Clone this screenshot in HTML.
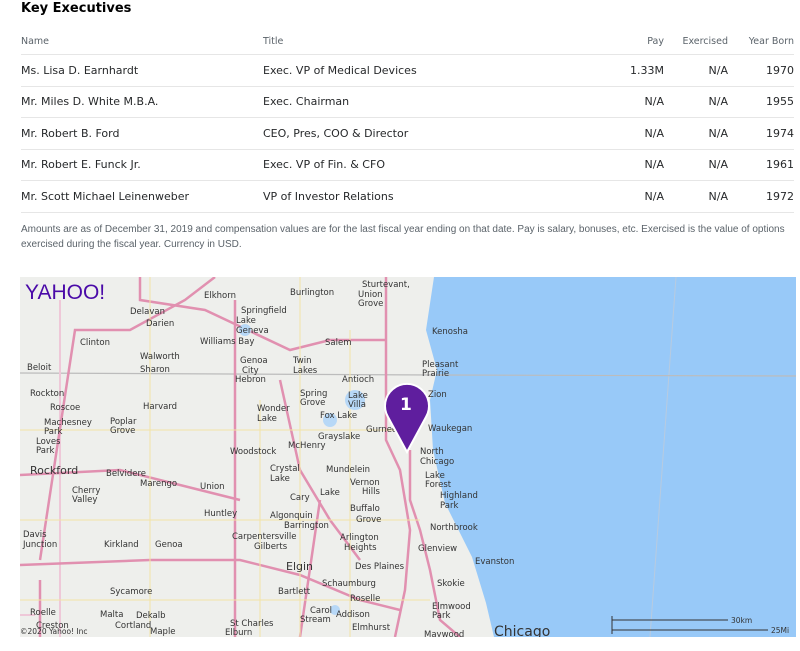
<!DOCTYPE html>
<html><head><meta charset="utf-8"><style>
body{margin:0;background:#fff;font-family:"DejaVu Sans","Liberation Sans",sans-serif;color:#26282a;width:800px;height:651px;overflow:hidden;position:relative}
h3{position:absolute;left:21px;top:1px;margin:0;font-size:13px;font-weight:bold;color:#000}
.r{position:absolute;left:21px;width:773px;height:31px;border-bottom:1px solid #e6e6e6;font-size:11px}
.r span{position:absolute;top:0;line-height:31px;white-space:nowrap}
.h{color:#5b636a;font-size:9.5px}
.c1{left:0}.c2{left:242px}.c3{right:130px}.c4{right:66px}.c5{right:0}
.note{position:absolute;left:21px;top:222px;width:770px;font-family:"Liberation Sans",sans-serif;font-size:10px;line-height:15px;color:#5b636a}
svg text{font-family:"DejaVu Sans",sans-serif;font-size:8.5px;fill:#333}
</style></head><body>
<h3>Key Executives</h3>
<div class="r h" style="top:27px;height:27px"><span class="c1" style="line-height:30px">Name</span><span class="c2" style="line-height:30px">Title</span><span class="c3" style="line-height:30px">Pay</span><span class="c4" style="line-height:30px">Exercised</span><span class="c5" style="line-height:30px">Year Born</span></div>
<div class="r" style="top:55px"><span class="c1">Ms. Lisa D. Earnhardt</span><span class="c2">Exec. VP of Medical Devices</span><span class="c3">1.33M</span><span class="c4">N/A</span><span class="c5">1970</span></div>
<div class="r" style="top:86px"><span class="c1">Mr. Miles D. White M.B.A.</span><span class="c2">Exec. Chairman</span><span class="c3">N/A</span><span class="c4">N/A</span><span class="c5">1955</span></div>
<div class="r" style="top:118px"><span class="c1">Mr. Robert B. Ford</span><span class="c2">CEO, Pres, COO &amp; Director</span><span class="c3">N/A</span><span class="c4">N/A</span><span class="c5">1974</span></div>
<div class="r" style="top:149px"><span class="c1">Mr. Robert E. Funck Jr.</span><span class="c2">Exec. VP of Fin. &amp; CFO</span><span class="c3">N/A</span><span class="c4">N/A</span><span class="c5">1961</span></div>
<div class="r" style="top:181px"><span class="c1">Mr. Scott Michael Leinenweber</span><span class="c2">VP of Investor Relations</span><span class="c3">N/A</span><span class="c4">N/A</span><span class="c5">1972</span></div>
<div class="note">Amounts are as of December 31, 2019 and compensation values are for the last fiscal year ending on that date. Pay is salary, bonuses, etc. Exercised is the value of options<br>exercised during the fiscal year. Currency in USD.</div>
<svg style="position:absolute;left:20px;top:277px" width="776" height="360" viewBox="20 277 776 360">
<rect x="20" y="277" width="776" height="360" fill="#eeefec"/>
<path d="M434 277 L796 277 L796 637 L494 637 L486 603 L472 557 L445 503 L433 450 L430 400 L437 370 L426 330 Z" fill="#98c9f8"/>
<path d="M676 277 L650 637" stroke="#b8cbe0" stroke-width="1" fill="none"/>
<path d="M20 373 L434 375 M437 375 L796 376" stroke="#bcbcbc" stroke-width="1.2" fill="none"/>
<g fill="none" stroke="#eec8d8" stroke-width="2">
<path d="M20 615 L35 615 M60 300 L60 637"/>
</g>
<g fill="none" stroke="#e190b0" stroke-width="2.5">
<path d="M40 580 L40 637 M40 560 L75 330 L130 330 L185 300 L215 277"/>
<path d="M140 277 L140 300 L205 310 L290 350 L330 340 L386 340"/>
<path d="M386 277 L386 440 L400 470 L410 530 L405 590 L395 637"/>
<path d="M410 450 L410 500 L420 530 L430 570 L440 620 L460 637"/>
<path d="M20 565 L150 560 L240 560 L300 575 L360 600 L400 610"/>
<path d="M235 300 L235 637 M320 500 L300 637"/>
<path d="M20 475 L120 470 L200 490 L240 500"/>
<path d="M280 380 L300 470 L330 520 L360 560"/>
</g>
<g fill="none" stroke="#f2e3a6" stroke-width="1">
<path d="M20 430 L420 430 M20 520 L420 520 M150 277 L150 637 M300 277 L300 637 M350 330 L350 637 M20 600 L430 600 M260 400 L260 637"/>
</g>
<g fill="#b7d8f7"><circle cx="355" cy="400" r="10"/><circle cx="330" cy="420" r="7"/><circle cx="245" cy="330" r="6"/><circle cx="335" cy="610" r="5"/></g>
<text x="25" y="299" style="font-size:21px;fill:#4a0aa8;font-family:'Liberation Sans',sans-serif">YAHOO!</text>
<text x="204" y="298">Elkhorn</text><text x="290" y="295">Burlington</text><text x="362" y="287">Sturtevant,</text><text x="358" y="297">Union</text><text x="358" y="306">Grove</text>
<text x="130" y="314">Delavan</text><text x="146" y="326">Darien</text><text x="241" y="313">Springfield</text><text x="236" y="323">Lake</text><text x="236" y="333">Geneva</text>
<text x="80" y="345">Clinton</text><text x="200" y="344">Williams Bay</text><text x="325" y="345">Salem</text><text x="432" y="334">Kenosha</text>
<text x="140" y="359">Walworth</text><text x="27" y="370">Beloit</text><text x="140" y="372">Sharon</text><text x="240" y="363">Genoa</text><text x="242" y="373">City</text><text x="235" y="382">Hebron</text><text x="293" y="363">Twin</text><text x="293" y="373">Lakes</text><text x="342" y="382">Antioch</text><text x="422" y="367">Pleasant</text><text x="422" y="376">Prairie</text>
<text x="30" y="396">Rockton</text><text x="300" y="396">Spring</text><text x="300" y="405">Grove</text><text x="348" y="398">Lake</text><text x="348" y="407">Villa</text><text x="428" y="397">Zion</text>
<text x="50" y="410">Roscoe</text><text x="143" y="409">Harvard</text><text x="257" y="411">Wonder</text><text x="257" y="421">Lake</text><text x="320" y="418">Fox Lake</text>
<text x="44" y="425">Machesney</text><text x="44" y="434">Park</text><text x="110" y="424">Poplar</text><text x="110" y="433">Grove</text><text x="366" y="432">Gurnee</text><text x="428" y="431">Waukegan</text>
<text x="36" y="444">Loves</text><text x="36" y="453">Park</text><text x="318" y="439">Grayslake</text><text x="288" y="448">McHenry</text><text x="230" y="454">Woodstock</text><text x="420" y="454">North</text><text x="420" y="464">Chicago</text>
<text x="30" y="474" style="font-size:11px">Rockford</text><text x="106" y="476">Belvidere</text><text x="140" y="486">Marengo</text><text x="200" y="489">Union</text><text x="270" y="471">Crystal</text><text x="270" y="481">Lake</text><text x="326" y="472">Mundelein</text><text x="425" y="478">Lake</text><text x="425" y="487">Forest</text>
<text x="72" y="493">Cherry</text><text x="72" y="502">Valley</text><text x="350" y="485">Vernon</text><text x="362" y="494">Hills</text><text x="290" y="500">Cary</text><text x="320" y="495">Lake</text><text x="440" y="498">Highland</text><text x="440" y="508">Park</text>
<text x="204" y="516">Huntley</text><text x="270" y="518">Algonquin</text><text x="284" y="528">Barrington</text><text x="350" y="511">Buffalo</text><text x="356" y="522">Grove</text><text x="430" y="530">Northbrook</text>
<text x="23" y="537">Davis</text><text x="23" y="547">Junction</text><text x="104" y="547">Kirkland</text><text x="155" y="547">Genoa</text><text x="232" y="539">Carpentersville</text><text x="254" y="549">Gilberts</text><text x="340" y="540">Arlington</text><text x="344" y="550">Heights</text><text x="418" y="551">Glenview</text><text x="475" y="564">Evanston</text>
<text x="286" y="570" style="font-size:11px">Elgin</text><text x="355" y="569">Des Plaines</text><text x="110" y="594">Sycamore</text><text x="322" y="586">Schaumburg</text><text x="437" y="586">Skokie</text><text x="278" y="594">Bartlett</text><text x="350" y="601">Roselle</text>
<text x="30" y="615">Roelle</text><text x="100" y="617">Malta</text><text x="136" y="618">Dekalb</text><text x="310" y="613">Carol</text><text x="336" y="617">Addison</text><text x="432" y="609">Elmwood</text><text x="432" y="618">Park</text>
<text x="36" y="628">Creston</text><text x="115" y="628">Cortland</text><text x="230" y="626">St Charles</text><text x="300" y="622">Stream</text><text x="352" y="630">Elmhurst</text><text x="424" y="637">Maywood</text>
<text x="20" y="634" style="font-size:7.5px">©2020 Yahoo! Inc</text><text x="150" y="634">Maple</text><text x="225" y="635">Elburn</text>
<text x="494" y="636" style="font-size:14px">Chicago</text>
<path d="M612 620 L728 620 M612 630 L768 630" stroke="#333" fill="none"/><path d="M612 616 V634" stroke="#333"/>
<text x="731" y="623" style="font-size:7.5px">30km</text><text x="771" y="633" style="font-size:7.5px">25Mi</text>
<path d="M407 452 L388 417 A22 22 0 1 1 426 417 Z" fill="#5f1e9e" stroke="#fff" stroke-width="2"/>
<text x="400" y="410" style="font-size:17px;font-weight:bold;fill:#fff">1</text>
</svg>
</body></html>
